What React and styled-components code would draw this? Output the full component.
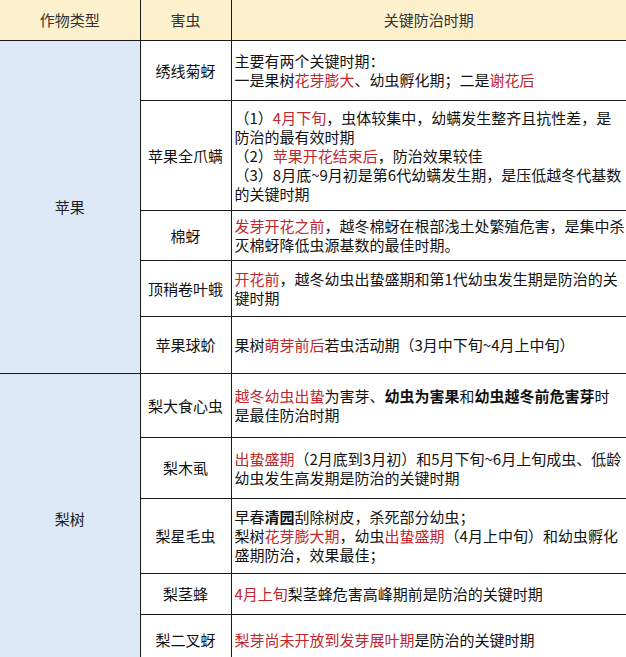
import React from 'react'
import styled, { createGlobalStyle } from 'styled-components'

const Global = createGlobalStyle`
  html, body {
    margin: 0;
    padding: 0;
    background: #fff;
  }
  body {
    font-family: "Noto Sans CJK SC", "Noto Sans", sans-serif;
    color: #111;
  }
`

const Page = styled.div`
  width: 626px;
  height: 657px;
  overflow: hidden;
  background: #fff;
`

const Table = styled.table`
  width: 626px;
  table-layout: fixed;
  border-collapse: collapse;
  font-size: 15px;
  line-height: 19px;
`

const Row = styled.tr`
  height: ${(p) => p.$h}px;
`

const HeadCell = styled.th`
  background: #fdf0cd;
  color: #333;
  font-weight: normal;
  text-align: center;
  padding: 0;
  border-bottom: 1px solid #1a1a1a;
  border-right: ${(p) => (p.$last ? 'none' : '1px solid #1a1a1a')};
`

const CropCell = styled.td`
  background: #dde9f6;
  color: #222;
  text-align: center;
  vertical-align: middle;
  padding: 0;
  border-right: 1px solid #1a1a1a;
  border-bottom: 1px solid #1a1a1a;
`

const PestCell = styled.td`
  text-align: center;
  vertical-align: middle;
  padding: 0;
  white-space: nowrap;
  border-right: 1px solid #1a1a1a;
  border-bottom: 1px solid #1a1a1a;
`

const PeriodCell = styled.td`
  vertical-align: middle;
  padding: 0 0 0 3px;
  white-space: nowrap;
  border-bottom: 1px solid #1a1a1a;
  b {
    font-weight: bold;
  }
`

const Line = styled.div`
  display: block;
`

const Red = styled.span`
  color: #c0262c;
`

const rows = [
  {
    crop: '苹果',
    span: 5,
    pest: '绣线菊蚜',
    h: 60,
    lines: [
      <>主要有两个关键时期：</>,
      <>一是果树<Red>花芽膨大</Red>、幼虫孵化期；二是<Red>谢花后</Red></>,
    ],
  },
  {
    pest: '苹果全爪螨',
    h: 110,
    lines: [
      <>（1）<Red>4月下旬</Red>，虫体较集中，幼螨发生整齐且抗性差，是</>,
      <>防治的最有效时期</>,
      <>（2）<Red>苹果开花结束后</Red>，防治效果较佳</>,
      <>（3）8月底~9月初是第6代幼螨发生期，是压低越冬代基数</>,
      <>的关键时期</>,
    ],
  },
  {
    pest: '棉蚜',
    h: 50,
    lines: [
      <><Red>发芽开花之前</Red>，越冬棉蚜在根部浅土处繁殖危害，是集中杀</>,
      <>灭棉蚜降低虫源基数的最佳时期。</>,
    ],
  },
  {
    pest: '顶稍卷叶蛾',
    h: 56,
    lines: [
      <><Red>开花前</Red>，越冬幼虫出蛰盛期和第1代幼虫发生期是防治的关</>,
      <>键时期</>,
    ],
  },
  {
    pest: '苹果球蚧',
    h: 57,
    lines: [<>果树<Red>萌芽前后</Red>若虫活动期（3月中下旬~4月上中旬）</>],
  },
  {
    crop: '梨树',
    span: 6,
    pest: '梨大食心虫',
    h: 64,
    lines: [
      <><Red>越冬幼虫出蛰</Red>为害芽、<b>幼虫为害果</b>和<b>幼虫越冬前危害芽</b>时</>,
      <>是最佳防治时期</>,
    ],
  },
  {
    pest: '梨木虱',
    h: 61,
    lines: [
      <><Red>出蛰盛期</Red>（2月底到3月初）和5月下旬~6月上旬成虫、低龄</>,
      <>幼虫发生高发期是防治的关键时期</>,
    ],
  },
  {
    pest: '梨星毛虫',
    h: 75,
    lines: [
      <>早春<b>清园</b>刮除树皮，杀死部分幼虫；</>,
      <>梨树<Red>花芽膨大期</Red>，幼虫<Red>出蛰盛期</Red>（4月上中旬）和幼虫孵化</>,
      <>盛期防治，效果最佳；</>,
    ],
  },
  {
    pest: '梨茎蜂',
    h: 41,
    lines: [<><Red>4月上旬</Red>梨茎蜂危害高峰期前是防治的关键时期</>],
  },
  {
    pest: '梨二叉蚜',
    h: 50,
    lines: [<><Red>梨芽尚未开放到发芽展叶期</Red>是防治的关键时期</>],
  },
]

export default function App() {
  return (
    <Page>
      <Global />
      <Table>
        <colgroup>
          <col style={{ width: 140 }} />
          <col style={{ width: 91 }} />
          <col style={{ width: 395 }} />
        </colgroup>
        <thead>
          <Row $h={40}>
            <HeadCell>作物类型</HeadCell>
            <HeadCell>害虫</HeadCell>
            <HeadCell $last>关键防治时期</HeadCell>
          </Row>
        </thead>
        <tbody>
          {rows.map((r) => (
            <Row key={r.pest} $h={r.h}>
              {r.crop && <CropCell rowSpan={r.span}>{r.crop}</CropCell>}
              <PestCell>{r.pest}</PestCell>
              <PeriodCell>
                {r.lines.map((l, i) => (
                  <Line key={i}>{l}</Line>
                ))}
              </PeriodCell>
            </Row>
          ))}
        </tbody>
      </Table>
    </Page>
  )
}
